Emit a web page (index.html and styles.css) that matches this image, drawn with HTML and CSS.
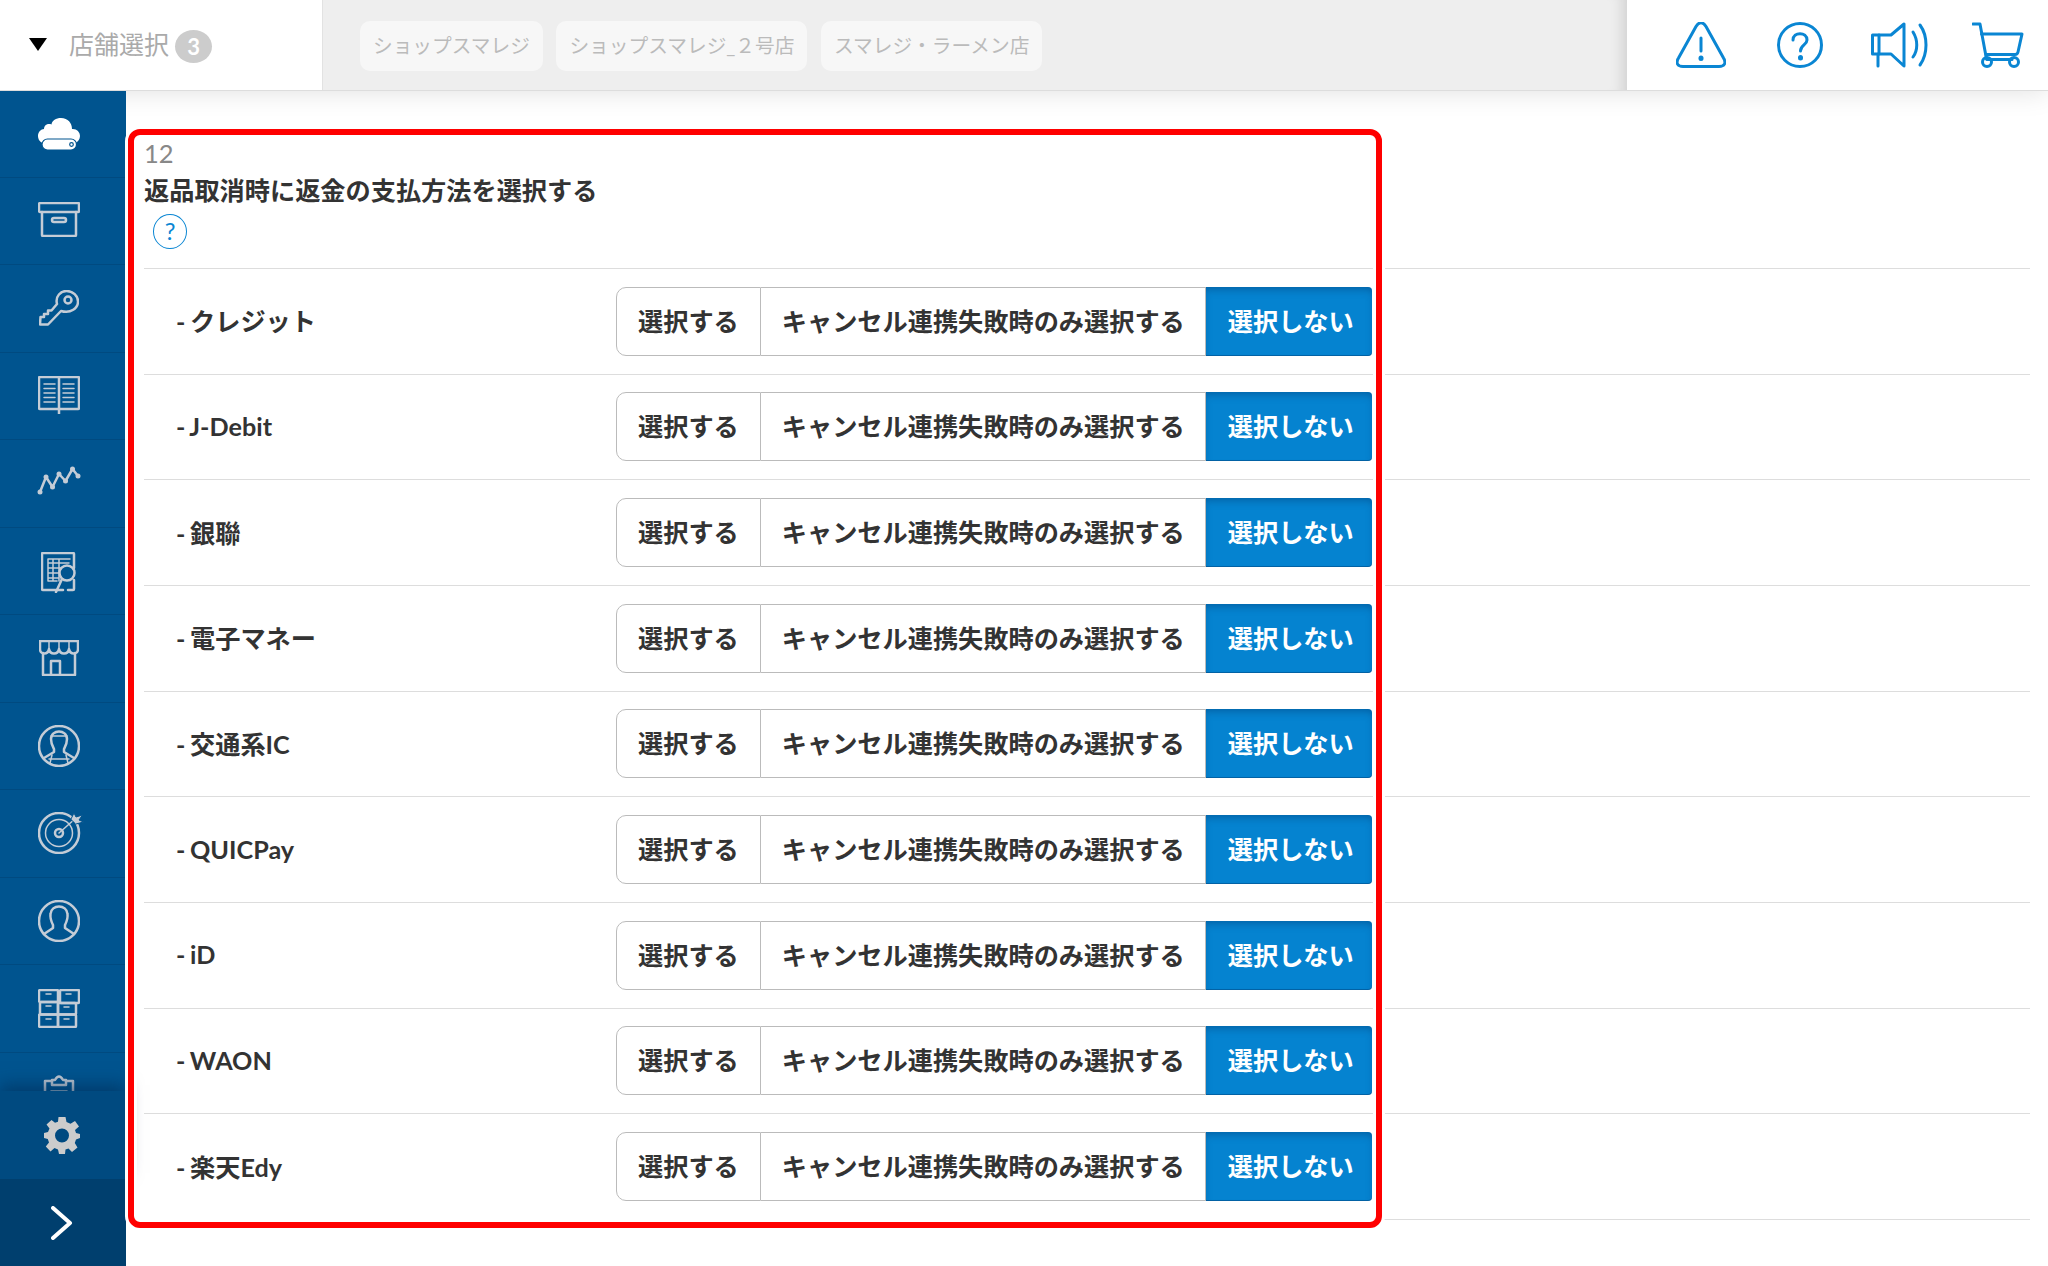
FILE: index.html
```html
<!DOCTYPE html>
<html lang="ja">
<head>
<meta charset="utf-8">
<title>店舗選択</title>
<link rel="stylesheet" href="styles.css">
</head>
<body>
<header class="topbar">
  <div class="store-select">
    <span class="caret"></span>
    <span class="store-label">店舗選択</span>
    <span class="store-count">3</span>
  </div>
  <div class="store-tabs">
    <span class="store-tab">ショップスマレジ</span>
    <span class="store-tab">ショップスマレジ_２号店</span>
    <span class="store-tab">スマレジ・ラーメン店</span>
  </div>
  <div class="top-actions">
    <svg class="top-icon icon-alert" viewBox="0 0 50 46"><path d="M20 4.500 L2.500 36 C-.5 41 1.500 44.500 7 44.500 H43 C48.500 44.500 50.500 41 47.500 36 L30 4.500 C27 -.5 23 -.5 20 4.500 Z"/><path d="M25 16 V29"/><path class="dot" d="M25 36 v.5"/></svg>
    <svg class="top-icon icon-help" viewBox="0 0 46 46"><circle cx="23" cy="23" r="21.500"/><path d="M16 18 C16 9.500 30 9.500 30 18 C30 23 23.500 23 23.500 29"/><path class="dot" d="M23.500 35.500 v.5"/></svg>
    <svg class="top-icon icon-horn" viewBox="0 0 58 46"><path d="M1.500 13 H20 L33 2 V44 L20 32 H1.500 Z"/><path d="M8 13 V32 M7 32 V44"/><path d="M42 10 C47 18 47 28 42 35"/><path d="M49 3 C57 14 57 32 49 43"/></svg>
    <svg class="top-icon icon-cart" viewBox="0 0 52 46"><path d="M1 2 H8 L14.500 37"/><path d="M9.500 12 H50 L46 30 Q45.500 32.500 43 32.500 H14"/><path d="M15 37.500 H40"/><circle cx="15" cy="40" r="4.500"/><circle cx="42" cy="40" r="4.500"/></svg>
  </div>
</header>

<div class="page">
  <aside class="sidebar">
    <nav class="side-nav">
      <a class="side-item">
        <svg class="side-icon icon-cloud" viewBox="0 0 42 32"><path class="solid" d="M5 25 C1 24 0 20 0 18 C0 14 3 11 6 11 C6 7 10 5 13.500 6.500 C14 2.500 18 0 23 0 C30 0 34 5 34 11 C38.500 10.500 42 14 42 18 C42 21 40 24 37 25 Z"/><rect class="solid-line" x="4" y="21" width="34.500" height="11" rx="5.500"/><circle class="drive-dot" cx="33.500" cy="26.500" r="1.800"/></svg>
      </a>
      <a class="side-item item-up">
        <svg class="side-icon icon-box" viewBox="0 0 42 35"><rect x="1" y="1" width="40" height="9" rx="1"/><path d="M4 10 V33 Q4 34 5 34 H37 Q38 34 38 33 V10"/><rect x="14" y="16" width="14" height="4" rx="2"/></svg>
      </a>
      <a class="side-item">
        <svg class="side-icon icon-key" viewBox="0 0 40 36"><path d="M22 21 L9 34.500 H1 L1.500 27 H5 V24 H9 V20.500 H12.500 L18 14 C16 6 22 1 27.500 1 C34 1 39 6 39 11.500 C39 18 32 24 22 21 Z"/><circle cx="29" cy="10" r="3.500"/></svg>
      </a>
      <a class="side-item item-up-small">
        <svg class="side-icon icon-book" viewBox="0 0 42 38"><path d="M2 1 H40 Q41 1 41 2 V32 Q41 33 40 33 H2 Q1 33 1 32 V2 Q1 1 2 1 Z"/><path d="M21 1 V38"/><path class="thin" d="M6 8 H17 M6 12.500 H17 M6 17 H17 M6 21.500 H17 M6 26 H17 M25 8 H36 M25 12.500 H36 M25 17 H36 M25 21.500 H36 M25 26 H36"/></svg>
      </a>
      <a class="side-item item-up-large">
        <svg class="side-icon icon-chart" viewBox="0 0 44 29"><path d="M3 26 L9 11 L15.500 21 L22 8 L28.500 15 L35.500 3 L41 10"/><g class="dots"><circle cx="3" cy="26" r="2.500"/><circle cx="9" cy="11" r="2.500"/><circle cx="15.500" cy="21" r="2.500"/><circle cx="22" cy="8" r="2.500"/><circle cx="28.500" cy="15" r="2.500"/><circle cx="35.500" cy="3" r="2.500"/><circle cx="41" cy="10" r="2.500"/></g></svg>
      </a>
      <a class="side-item item-down">
        <svg class="side-icon icon-report" viewBox="0 0 36 41"><path d="M22 38 H2 Q1 38 1 37 V2 Q1 1 2 1 H32 Q33 1 33 2 V16 M33 28 V37 Q33 38 32 38 H27"/><path class="thin" d="M7 29 V7 H29 M7 11 H28 M7 16 H20 M7 21 H18 M7 26 H18 M12 7 V29 M18 7 V29 M7 29 H16"/><circle class="solid-lens" cx="26" cy="21" r="7.500"/><path d="M21 27 L15 40"/></svg>
      </a>
      <a class="side-item">
        <svg class="side-icon icon-shop" viewBox="0 0 40 36"><path d="M1 1 H39 V9 C39 15 31 15 30 9 C29 15 21 15 20 9 C19 15 11 15 10 9 C9 15 1 15 1 9 Z"/><path d="M10 1 V9 M20 1 V9 M30 1 V9" class="thin"/><path d="M4 13 V35 H36 V13"/><path d="M12 35 V21 H21 V35"/></svg>
      </a>
      <a class="side-item">
        <svg class="side-icon icon-staff" viewBox="0 0 42 42"><circle cx="21" cy="21" r="20"/><path d="M13 14 C13 4 29 4 29 14 C29 19 27 22 26 24 V27 L36 33 M16 24 C15 22 13 19 13 14 M16 24 V27 L6 33"/><path d="M13 11 H29 M11 34 H31 M12 38 L14 30 M30 38 L28 30" class="thin"/></svg>
      </a>
      <a class="side-item">
        <svg class="side-icon icon-target" viewBox="0 0 46 42"><circle cx="21" cy="21" r="20"/><circle class="thin" cx="21" cy="21" r="13.500"/><circle cx="21" cy="21" r="4"/><path class="thin" d="M21 21 L38 6"/><path class="feather" d="M33 7 L36 1 L38 5 L44.500 3 L41 8 L45.500 10 L38 12 Z"/></svg>
      </a>
      <a class="side-item">
        <svg class="side-icon icon-person" viewBox="0 0 42 42"><circle cx="21" cy="21" r="20"/><path d="M15 25 C13 21 12 18 12.500 14 C13 4 29 4 29.500 14 C30 18 29 21 27 25 V28 L36 34 M15 25 V28 L6 34"/></svg>
      </a>
      <a class="side-item">
        <svg class="side-icon icon-drawers" viewBox="0 0 42 39"><rect x="1" y="1" width="19" height="12" rx="1"/><rect x="22" y="1" width="19" height="13" rx="1"/><rect x="2" y="13" width="18" height="12.500" rx="1"/><rect x="20" y="14" width="18" height="11.500" rx="1"/><rect x="1" y="25.500" width="19" height="12.500" rx="1"/><rect x="20" y="25.500" width="18" height="12.500" rx="1"/><path class="thin" d="M8 5 H13 M28 5 H33 M8 17 H13 M26 18 H31 M8 30 H13 M26 30 H31"/></svg>
      </a>
      <a class="side-item">
        <svg class="side-icon icon-clip" viewBox="0 0 32 42"><path d="M9 6 H2 V41 H30 V6 H23"/><path d="M9 10 V5 H12 Q16 -2 20 5 H23 V10 Z"/><path class="thin" d="M8 16 H24"/></svg>
      </a>
    </nav>
    <div class="side-settings">
      <svg class="gear" viewBox="0 0 36 37"><path d="M14.500 0 H21.500 L22.500 5 L26.500 6.800 L31 4 L35 9.500 L31 13 L32 16 L36 17 V21 L32 22.500 L30.800 26 L33.500 30.500 L28 35 L24.500 31.500 L21.500 32.500 L21 37 H15 L14 32.500 L10.500 31 L6.500 34.500 L1.800 29.500 L5 25.500 L3.800 22 L0 21 V16 L4 15 L5.500 11.500 L2.500 7.500 L7.500 3 L11 5.800 L14 4.800 Z M18 11.500 A7 7 0 1 0 18 25.500 A7 7 0 1 0 18 11.500 Z"/></svg>
    </div>
    <div class="side-toggle">
      <svg class="chevron" viewBox="0 0 22 34"><path d="M2 2 L19 17 L2 32"/></svg>
    </div>
  </aside>

  <main class="content">
    <div class="setting-no">12</div>
    <h2 class="setting-title">返品取消時に返金の支払方法を選択する</h2>
    <div class="help-mark">?</div>

    <div class="pay-row">
      <div class="pay-name">- クレジット</div>
      <div class="btn-group"><span class="btn">選択する</span><span class="btn">キャンセル連携失敗時のみ選択する</span><span class="btn btn-on">選択しない</span></div>
    </div>
    <div class="pay-row">
      <div class="pay-name">- J-Debit</div>
      <div class="btn-group"><span class="btn">選択する</span><span class="btn">キャンセル連携失敗時のみ選択する</span><span class="btn btn-on">選択しない</span></div>
    </div>
    <div class="pay-row">
      <div class="pay-name">- 銀聯</div>
      <div class="btn-group"><span class="btn">選択する</span><span class="btn">キャンセル連携失敗時のみ選択する</span><span class="btn btn-on">選択しない</span></div>
    </div>
    <div class="pay-row">
      <div class="pay-name">- 電子マネー</div>
      <div class="btn-group"><span class="btn">選択する</span><span class="btn">キャンセル連携失敗時のみ選択する</span><span class="btn btn-on">選択しない</span></div>
    </div>
    <div class="pay-row">
      <div class="pay-name">- 交通系IC</div>
      <div class="btn-group"><span class="btn">選択する</span><span class="btn">キャンセル連携失敗時のみ選択する</span><span class="btn btn-on">選択しない</span></div>
    </div>
    <div class="pay-row">
      <div class="pay-name">- QUICPay</div>
      <div class="btn-group"><span class="btn">選択する</span><span class="btn">キャンセル連携失敗時のみ選択する</span><span class="btn btn-on">選択しない</span></div>
    </div>
    <div class="pay-row">
      <div class="pay-name">- iD</div>
      <div class="btn-group"><span class="btn">選択する</span><span class="btn">キャンセル連携失敗時のみ選択する</span><span class="btn btn-on">選択しない</span></div>
    </div>
    <div class="pay-row">
      <div class="pay-name">- WAON</div>
      <div class="btn-group"><span class="btn">選択する</span><span class="btn">キャンセル連携失敗時のみ選択する</span><span class="btn btn-on">選択しない</span></div>
    </div>
    <div class="pay-row">
      <div class="pay-name">- 楽天Edy</div>
      <div class="btn-group"><span class="btn">選択する</span><span class="btn">キャンセル連携失敗時のみ選択する</span><span class="btn btn-on">選択しない</span></div>
    </div>
  </main>
</div>
<div class="highlight"></div>
</body>
</html>
```

FILE: styles.css
```css
* { box-sizing: border-box; }
html, body { margin: 0; height: 1266px; overflow: hidden; background: #fff; }
body {
  font-family: Lato, "Noto Sans CJK JP", sans-serif;
  color: #333;
  position: relative;
}

/* Header */
.topbar {
  display: flex;
  height: 91px;
  border-bottom: 1px solid #ddd;
  background: #fff;
  box-shadow: 0 0 26px rgba(0, 0, 0, .13);
  position: relative;
  z-index: 1;
}
.store-select {
  width: 323px;
  flex: none;
  display: flex;
  align-items: center;
  padding-left: 29px;
  border-right: 1px solid #e2e2e2;
}
.caret {
  width: 0;
  height: 0;
  border-left: 9px solid transparent;
  border-right: 9px solid transparent;
  border-top: 13px solid #000;
  margin: -2px 22px 0 0;
}
.store-label { font-size: 25px; color: #aaa; line-height: 1; margin-top: -1px; }
.store-count {
  width: 37px;
  height: 33px;
  margin: 2px 0 0 6px;
  border-radius: 50%;
  background: #ccc;
  color: #fff;
  font-size: 22px;
  font-weight: 700;
  display: flex;
  align-items: center;
  justify-content: center;
}
.store-tabs {
  flex: 1;
  display: flex;
  align-items: flex-start;
  gap: 13.500px;
  padding: 21px 0 0 37px;
  background: #eee;
  box-shadow: inset -16px 0 14px -12px rgba(0, 0, 0, .13);
}
.store-tab {
  height: 50px;
  padding: 0 13px;
  background: #f7f7f7;
  border-radius: 10px;
  color: #bbb;
  font-size: 19.700px;
  line-height: 50px;
  white-space: nowrap;
}
.top-actions {
  width: 421px;
  flex: none;
  display: flex;
  align-items: flex-start;
  padding: 22px 0 0 49px;
}
.top-icon {
  height: 46px;
  flex: none;
  fill: none;
  stroke: #0a86d3;
  stroke-width: 3;
  stroke-linecap: round;
  stroke-linejoin: round;
}
.top-icon .dot { stroke-width: 5; }
.icon-alert { width: 50px; margin-right: 51px; }
.icon-help { width: 46px; margin-right: 48px; }
.icon-horn { width: 58px; margin-right: 42.500px; }
.icon-cart { width: 52px; }

/* Sidebar */
.page { display: flex; height: 1175px; }
.sidebar {
  width: 126px;
  flex: none;
  display: flex;
  flex-direction: column;
  background: #00548f;
  position: relative;
  z-index: 2;
}
.side-nav {
  flex: 1;
  min-height: 0;
  overflow: hidden;
  display: flex;
  flex-direction: column;
}
.side-item {
  height: 87.500px;
  flex: none;
  display: flex;
  align-items: center;
  justify-content: center;
  padding-right: 8px;
  border-bottom: 1px solid #004a80;
}
.side-item:first-child { height: 86.500px; }
.item-up { padding-bottom: 3px; }
.item-up-small { padding-bottom: 2px; }
.item-up-large { padding-bottom: 6px; }
.item-down { padding-top: 4px; }
.side-icon {
  flex: none;
  fill: none;
  stroke: #c4ccd6;
  stroke-width: 2.500;
  stroke-linejoin: round;
  stroke-linecap: round;
}
.side-icon .thin { stroke-width: 1.500; }
.side-icon .solid { fill: #fff; stroke: none; }
.side-icon .solid-line { fill: #fff; stroke: #00548f; stroke-width: 1.200; }
.side-icon .drive-dot { fill: #fff; stroke: #00548f; stroke-width: 1.200; }
.side-icon .dots { fill: #c4ccd6; stroke: none; }
.side-icon .solid-lens { fill: #00548f; }
.side-icon .feather { fill: #c4ccd6; stroke: #00548f; stroke-width: 1; }
.icon-cloud { width: 42px; height: 32px; }
.icon-box { width: 42px; height: 35px; }
.icon-key { width: 40px; height: 36px; }
.icon-book { width: 42px; height: 38px; }
.icon-chart { width: 44px; height: 29px; }
.icon-report { width: 36px; height: 41px; }
.icon-shop { width: 40px; height: 36px; }
.icon-staff, .icon-person { width: 42px; height: 42px; }
.icon-target { width: 46px; height: 42px; margin-left: 4px; }
.icon-drawers { width: 42px; height: 39px; }
.icon-clip { width: 32px; height: 42px; }
.side-settings {
  height: 88px;
  flex: none;
  background: #004a80;
  box-shadow: 0 -6px 16px rgba(0, 40, 80, .55);
  display: flex;
  align-items: center;
  justify-content: center;
  padding-right: 3px;
  position: relative;
}
.gear { width: 36px; height: 37px; fill: #ccc; fill-rule: evenodd; }
.side-toggle {
  height: 87px;
  flex: none;
  background: #003f6e;
  display: flex;
  align-items: center;
  justify-content: center;
  padding-right: 3px;
  position: relative;
}
.chevron {
  width: 22px;
  height: 34px;
  fill: none;
  stroke: #fff;
  stroke-width: 4;
  stroke-linecap: round;
  stroke-linejoin: round;
}

/* Content */
.content { flex: 1; min-width: 0; padding: 44px 18px 0; }
.setting-no { font-size: 25.500px; line-height: 36px; color: #888; }
.setting-title { margin: 0; font-size: 25.200px; font-weight: 700; line-height: 39px; color: #333; }
.help-mark {
  width: 34px;
  height: 35px;
  margin: 4px 0 19px 9px;
  border: 1px solid #0a86d3;
  border-radius: 50%;
  color: #0a86d3;
  font-size: 24px;
  line-height: 32px;
  text-align: center;
}
.pay-row {
  height: 105.670px;
  display: flex;
  align-items: center;
  border-top: 1px solid #ddd;
}
.pay-row:last-child { height: 106.670px; border-bottom: 1px solid #ddd; }
.pay-name {
  width: 472px;
  flex: none;
  padding: 0 0 2px 32px;
  font-size: 25.200px;
  font-weight: 700;
  word-spacing: -1.500px;
  color: #333;
}
.btn-group { display: flex; height: 69px; }
.btn {
  display: flex;
  align-items: center;
  height: 69px;
  padding: 0 21px 3px;
  border: 1px solid #bbb;
  border-left-width: 0;
  background: #fff;
  font-size: 25.200px;
  font-weight: 700;
  color: #333;
  white-space: nowrap;
}
.btn:first-child { border-left-width: 1px; border-radius: 10px 0 0 10px; }
.btn:nth-child(2) { padding-right: 20px; }
.btn-on {
  width: 166px;
  padding: 0 0 3px 4px;
  justify-content: center;
  border: 0;
  border-radius: 0 4px 4px 0;
  background: #0583d0;
  box-shadow: inset 0 5px 8px -3px rgba(0, 40, 90, .4), inset 0 -1px 0 rgba(0, 40, 90, .35);
  color: #fff;
}

/* Annotation frame */
.highlight {
  position: absolute;
  left: 128px;
  top: 129px;
  width: 1254px;
  height: 1099px;
  border: 6px solid #f00;
  border-radius: 12px;
  box-shadow: 0 0 0 3px #fff, inset 0 0 0 3px #fff;
  z-index: 3;
  pointer-events: none;
}
```
